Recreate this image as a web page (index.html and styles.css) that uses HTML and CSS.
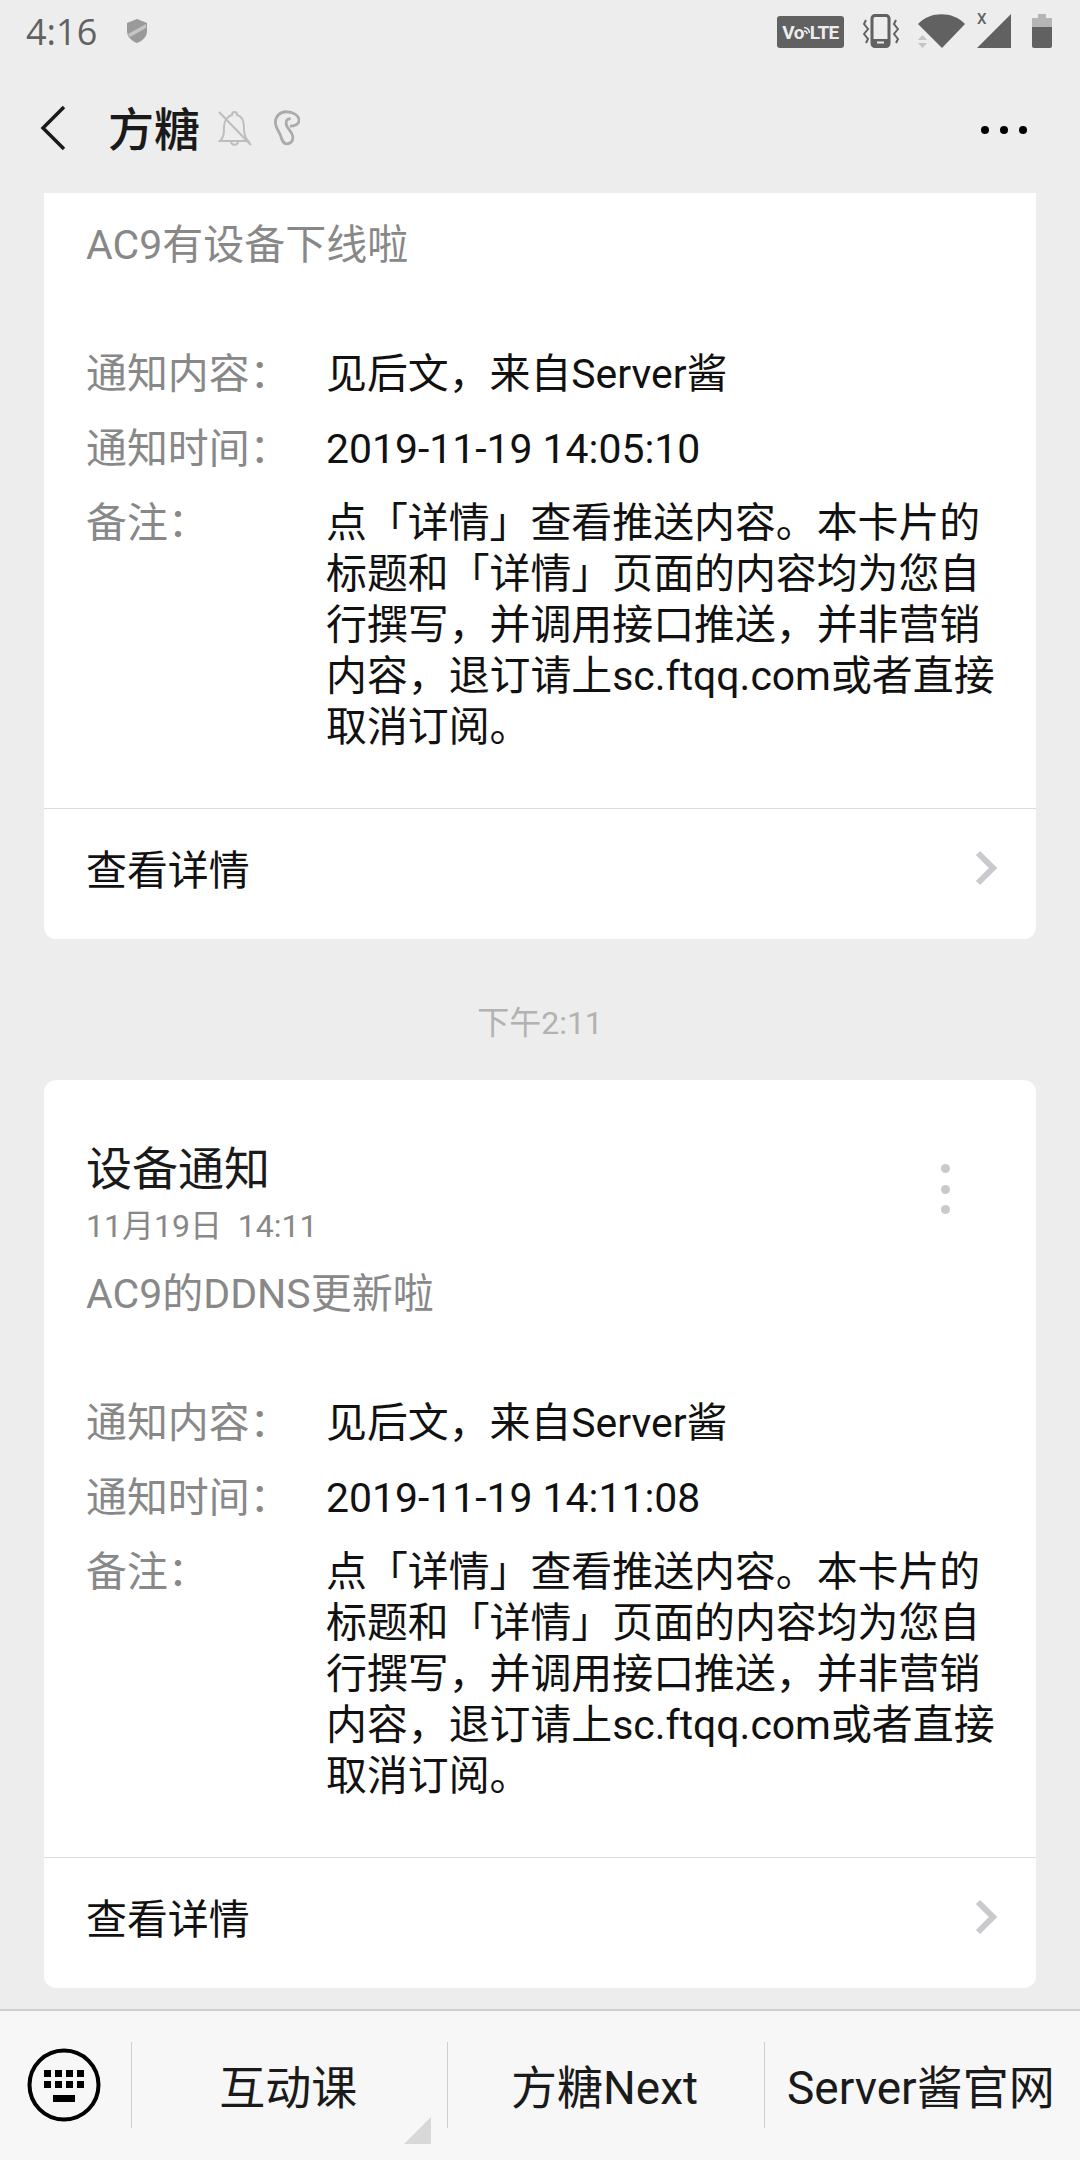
FILE: index.html
```html
<!DOCTYPE html>
<html lang="zh-CN">
<head>
    <meta charset="UTF-8">
    <meta name="viewport" content="width=device-width, initial-scale=1.0">
    <title>方糖</title>
    <link rel="stylesheet" href="styles.css">
</head>
<body>

<div class="page">
    <div class="top">
        <div class="status-bar">
            <div class="status-left">
                <span class="clock">4:16</span>
                <svg class="shield" width="20" height="24" viewBox="0 0 20 24">
                    <path d="M10 0 L20 4 V12 C20 18 15 22 10 24 C5 22 0 18 0 12 V4 Z" fill="#9a9a9a"/>
                    <path d="M1 15 L19 5 V9 L3 18 Z" fill="#c4c4c4"/>
                </svg>
            </div>
            <div class="status-right">
                <div class="volte">
                    <span>Vo</span>
                    <svg width="6" height="13" viewBox="0 0 6 13">
                        <path d="M0 1.500 C3 1.500 5.500 4 5.500 7 M0 5 C1.500 5 3 6 3 8" fill="none" stroke="#ededed" stroke-width="1.500"/>
                    </svg>
                    <span>LTE</span>
                </div>
                <svg class="vibrate" width="36" height="34" viewBox="0 0 36 34">
                    <rect x="9" y="1.500" width="17" height="31" rx="3" fill="none" stroke="#616161" stroke-width="3"/>
                    <rect x="9" y="25" width="17" height="7" fill="#616161"/>
                    <rect x="14" y="27.500" width="7" height="2" fill="#ededed"/>
                    <path d="M3 6 L1 10 L5 15 L1 20 L5 25 L3 29" fill="none" stroke="#616161" stroke-width="2"/>
                    <path d="M33 6 L31 10 L35 15 L31 20 L35 25 L33 29" fill="none" stroke="#616161" stroke-width="2"/>
                </svg>
                <svg class="wifi" width="48" height="34" viewBox="0 0 48 34">
                    <path d="M0 10 C12 -3 35 -3 47 10 L24 34 Z" fill="#616161"/>
                    <path d="M0 26 L4.500 21 L9 26 Z M0 29 H9 L4.500 34 Z" fill="#c4c4c4"/>
                </svg>
                <div class="signal">
                    <span class="signal-x">X</span>
                    <svg width="35" height="34" viewBox="0 0 35 34">
                        <path d="M34 0 V34 H0 Z" fill="#616161"/>
                    </svg>
                </div>
                <svg class="battery" width="20" height="34" viewBox="0 0 20 34">
                    <path d="M6 0 H14 V4 H20 V13 H0 V4 H6 Z" fill="#b5b5b5"/>
                    <path d="M0 13 H20 V32 Q20 34 18 34 H2 Q0 34 0 32 Z" fill="#616161"/>
                </svg>
            </div>
        </div>
        <div class="nav-bar">
            <svg class="back" width="26" height="46" viewBox="0 0 26 46">
                <path d="M24 2 L3 23 L24 44" fill="none" stroke="#1a1a1a" stroke-width="3.500"/>
            </svg>
            <span class="nav-title">方糖</span>
            <svg class="bell" width="34" height="36" viewBox="0 0 34 36">
                <path d="M2 31 C6 27 6 23 6 17 C6 10 10 6 14 5 C14 1 19 1 19 5 C24 6 26 11 26 18 C26 24 27 28 30 31 Z M13 31 C13 36 20 36 20 31" fill="none" stroke="#bdbdbd" stroke-width="2"/>
                <path d="M1 2 L33 35" stroke="#bdbdbd" stroke-width="2"/>
            </svg>
            <svg class="ear" width="26" height="36" viewBox="0 0 28 38">
                <path d="M17 17 C22 17 27 15 27 11 C27 5 20 1.500 13 1.500 C6 1.500 1.500 7 1.500 13 C1.500 18 5 22 7 27 C8.500 31 9 36 14 36 C19 36 21 32 20 27 C19 22 13 19 13 14 C13 11 15 9 18 9" fill="none" stroke="#ababab" stroke-width="3"/>
            </svg>
            <div class="nav-more"><i></i><i></i><i></i></div>
        </div>
    </div>

    <div class="messages">
        <div class="card card-cut">
            <div class="card-body">
                <div class="subtitle">AC9有设备下线啦</div>
                <div class="rows">
                    <div class="row"><div class="label">通知内容：</div><div class="value">见后文，来自Server酱</div></div>
                    <div class="row"><div class="label">通知时间：</div><div class="value">2019-11-19 14:05:10</div></div>
                    <div class="row"><div class="label">备注：</div><div class="value">点「详情」查看推送内容。本卡片的标题和「详情」页面的内容均为您自行撰写，并调用接口推送，并非营销内容，退订请上sc.ftqq.com或者直接取消订阅。</div></div>
                </div>
            </div>
            <div class="card-link">
                <span>查看详情</span>
                <svg width="22" height="36" viewBox="0 0 22 36"><path d="M3 3 L18 18 L3 33" fill="none" stroke="#c9c9ce" stroke-width="6"/></svg>
            </div>
        </div>

        <div class="msg-time">下午2:11</div>

        <div class="card">
            <div class="card-body card-full">
                <div class="card-head">
                    <div>
                        <div class="card-title">设备通知</div>
                        <div class="card-date">11月19日&nbsp;&nbsp;14:11</div>
                    </div>
                    <div class="card-more"><i></i><i></i><i></i></div>
                </div>
                <div class="subtitle">AC9的DDNS更新啦</div>
                <div class="rows">
                    <div class="row"><div class="label">通知内容：</div><div class="value">见后文，来自Server酱</div></div>
                    <div class="row"><div class="label">通知时间：</div><div class="value">2019-11-19 14:11:08</div></div>
                    <div class="row"><div class="label">备注：</div><div class="value">点「详情」查看推送内容。本卡片的标题和「详情」页面的内容均为您自行撰写，并调用接口推送，并非营销内容，退订请上sc.ftqq.com或者直接取消订阅。</div></div>
                </div>
            </div>
            <div class="card-link">
                <span>查看详情</span>
                <svg width="22" height="36" viewBox="0 0 22 36"><path d="M3 3 L18 18 L3 33" fill="none" stroke="#c9c9ce" stroke-width="6"/></svg>
            </div>
        </div>
    </div>

    <div class="menu-bar">
        <div class="menu-key">
            <svg width="74" height="74" viewBox="0 0 74 74">
                <circle cx="37" cy="37" r="34.500" fill="none" stroke="#000" stroke-width="4"/>
                <path d="M17 22 h7 v7 h-7 Z M28 22 h7 v7 h-7 Z M39 22 h7 v7 h-7 Z M50 22 h7 v7 h-7 Z M17 33 h7 v7 h-7 Z M28 33 h7 v7 h-7 Z M39 33 h7 v7 h-7 Z M50 33 h7 v7 h-7 Z M26 47 h22 v7 h-22 Z" fill="#000"/>
            </svg>
        </div>
        <div class="menu-item has-sub">互动课</div>
        <div class="menu-item">方糖Next</div>
        <div class="menu-item">Server酱官网</div>
    </div>
</div>

</body>
</html>
```

FILE: styles.css
```css
html, body {
    margin: 0;
    padding: 0;
}
body {
    font-family: Roboto, "Noto Sans CJK SC", sans-serif;
    background-color: #ededed;
    color: #1a1a1a;
}
i {
    display: block;
}
.page {
    width: 1080px;
    height: 2160px;
    display: flex;
    flex-direction: column;
    overflow: hidden;
}
.top {
    height: 193px;
    flex-shrink: 0;
}
.status-bar {
    height: 62px;
    display: flex;
    justify-content: space-between;
    align-items: center;
    padding: 0 28px 0 26px;
}
.status-left {
    display: flex;
    align-items: center;
    gap: 30px;
}
.clock {
    font-family: "Open Sans", sans-serif;
    font-size: 36px;
    color: #616161;
}
.status-right {
    display: flex;
    align-items: center;
}
.volte {
    width: 67px;
    height: 32px;
    margin-top: 2px;
    background-color: #616161;
    border-radius: 3px;
    color: #ededed;
    font-size: 19px;
    font-weight: 700;
    letter-spacing: -0.600px;
    display: flex;
    align-items: center;
    justify-content: center;
}
.vibrate {
    margin-left: 19px;
}
.wifi {
    margin-left: 19px;
}
.signal {
    display: flex;
    align-items: flex-start;
    position: relative;
    margin-left: 11px;
}
.signal-x {
    position: absolute;
    left: 0;
    top: 0;
    font-size: 15px;
    line-height: 11px;
    font-weight: 500;
    color: #616161;
}
.battery {
    margin-left: 20px;
}
.nav-bar {
    height: 131px;
    display: flex;
    align-items: center;
    padding: 0 53px 0 40px;
}
.nav-title {
    font-size: 46px;
    font-weight: 500;
    margin-left: 42px;
    margin-bottom: 3px;
}
.bell {
    margin-left: 18px;
}
.ear {
    margin-left: 22px;
}
.nav-more {
    margin-left: auto;
    margin-top: 4px;
    display: flex;
    gap: 11px;
}
.nav-more i {
    width: 8px;
    height: 8px;
    border-radius: 50%;
    background-color: #000;
}
.messages {
    flex: 1;
    padding: 0 44px;
    display: flex;
    flex-direction: column;
}
.card {
    background-color: white;
    border-radius: 12px;
}
.card-cut {
    border-radius: 0 0 12px 12px;
}
.card-body {
    padding: 24px 36px 55px 42px;
}
.card-full {
    padding-top: 59px;
}
.card-head {
    display: flex;
    justify-content: space-between;
}
.card-title {
    font-size: 46px;
    line-height: 60px;
}
.card-date {
    font-size: 32px;
    line-height: 40px;
    color: #888;
    margin-top: 7px;
}
.card-more {
    display: flex;
    flex-direction: column;
    gap: 11.600px;
    margin: 25px 50px 0 0;
}
.card-more i {
    width: 9px;
    height: 9px;
    border-radius: 50%;
    background-color: #c9c9ce;
}
.subtitle {
    font-size: 41px;
    line-height: 56px;
    color: #888;
    margin-top: 20px;
}
.card-cut .subtitle {
    margin-top: 0;
}
.rows {
    margin-top: 76px;
    display: flex;
    flex-direction: column;
    gap: 23.500px;
}
.row {
    display: flex;
    font-size: 40.900px;
    line-height: 51px;
}
.label {
    width: 240px;
    flex-shrink: 0;
    color: #888;
}
.value {
    flex: 1;
    color: #111;
}
.card-link {
    height: 116px;
    border-top: 1px solid #dcdcdc;
    padding: 0 39px 14px 42px;
    display: flex;
    justify-content: space-between;
    align-items: center;
    font-size: 40.900px;
    color: #111;
}
.card-link svg {
    margin-top: 2px;
}
.msg-time {
    height: 121px;
    padding-top: 20px;
    display: flex;
    align-items: center;
    justify-content: center;
    font-size: 32px;
    color: #b2b2b2;
}
.menu-bar {
    height: 151px;
    flex-shrink: 0;
    display: flex;
    box-sizing: border-box;
    border-top: 2px solid #cfcfcf;
    background-color: #f7f7f7;
    padding: 31px 0 32px;
}
.menu-key {
    width: 131px;
    padding-right: 3px;
    box-sizing: border-box;
    display: flex;
    align-items: center;
    justify-content: center;
}
.menu-item {
    flex: 1;
    box-sizing: border-box;
    display: flex;
    align-items: center;
    justify-content: center;
    border-left: 1px solid #cfcfcf;
    font-size: 46px;
    white-space: nowrap;
    position: relative;
    padding: 0 3px 2px 0;
}
.has-sub::after {
    content: "";
    position: absolute;
    right: 16px;
    bottom: -16px;
    width: 0;
    height: 0;
    border-left: 27px solid transparent;
    border-bottom: 27px solid #d8d8d8;
}
```
